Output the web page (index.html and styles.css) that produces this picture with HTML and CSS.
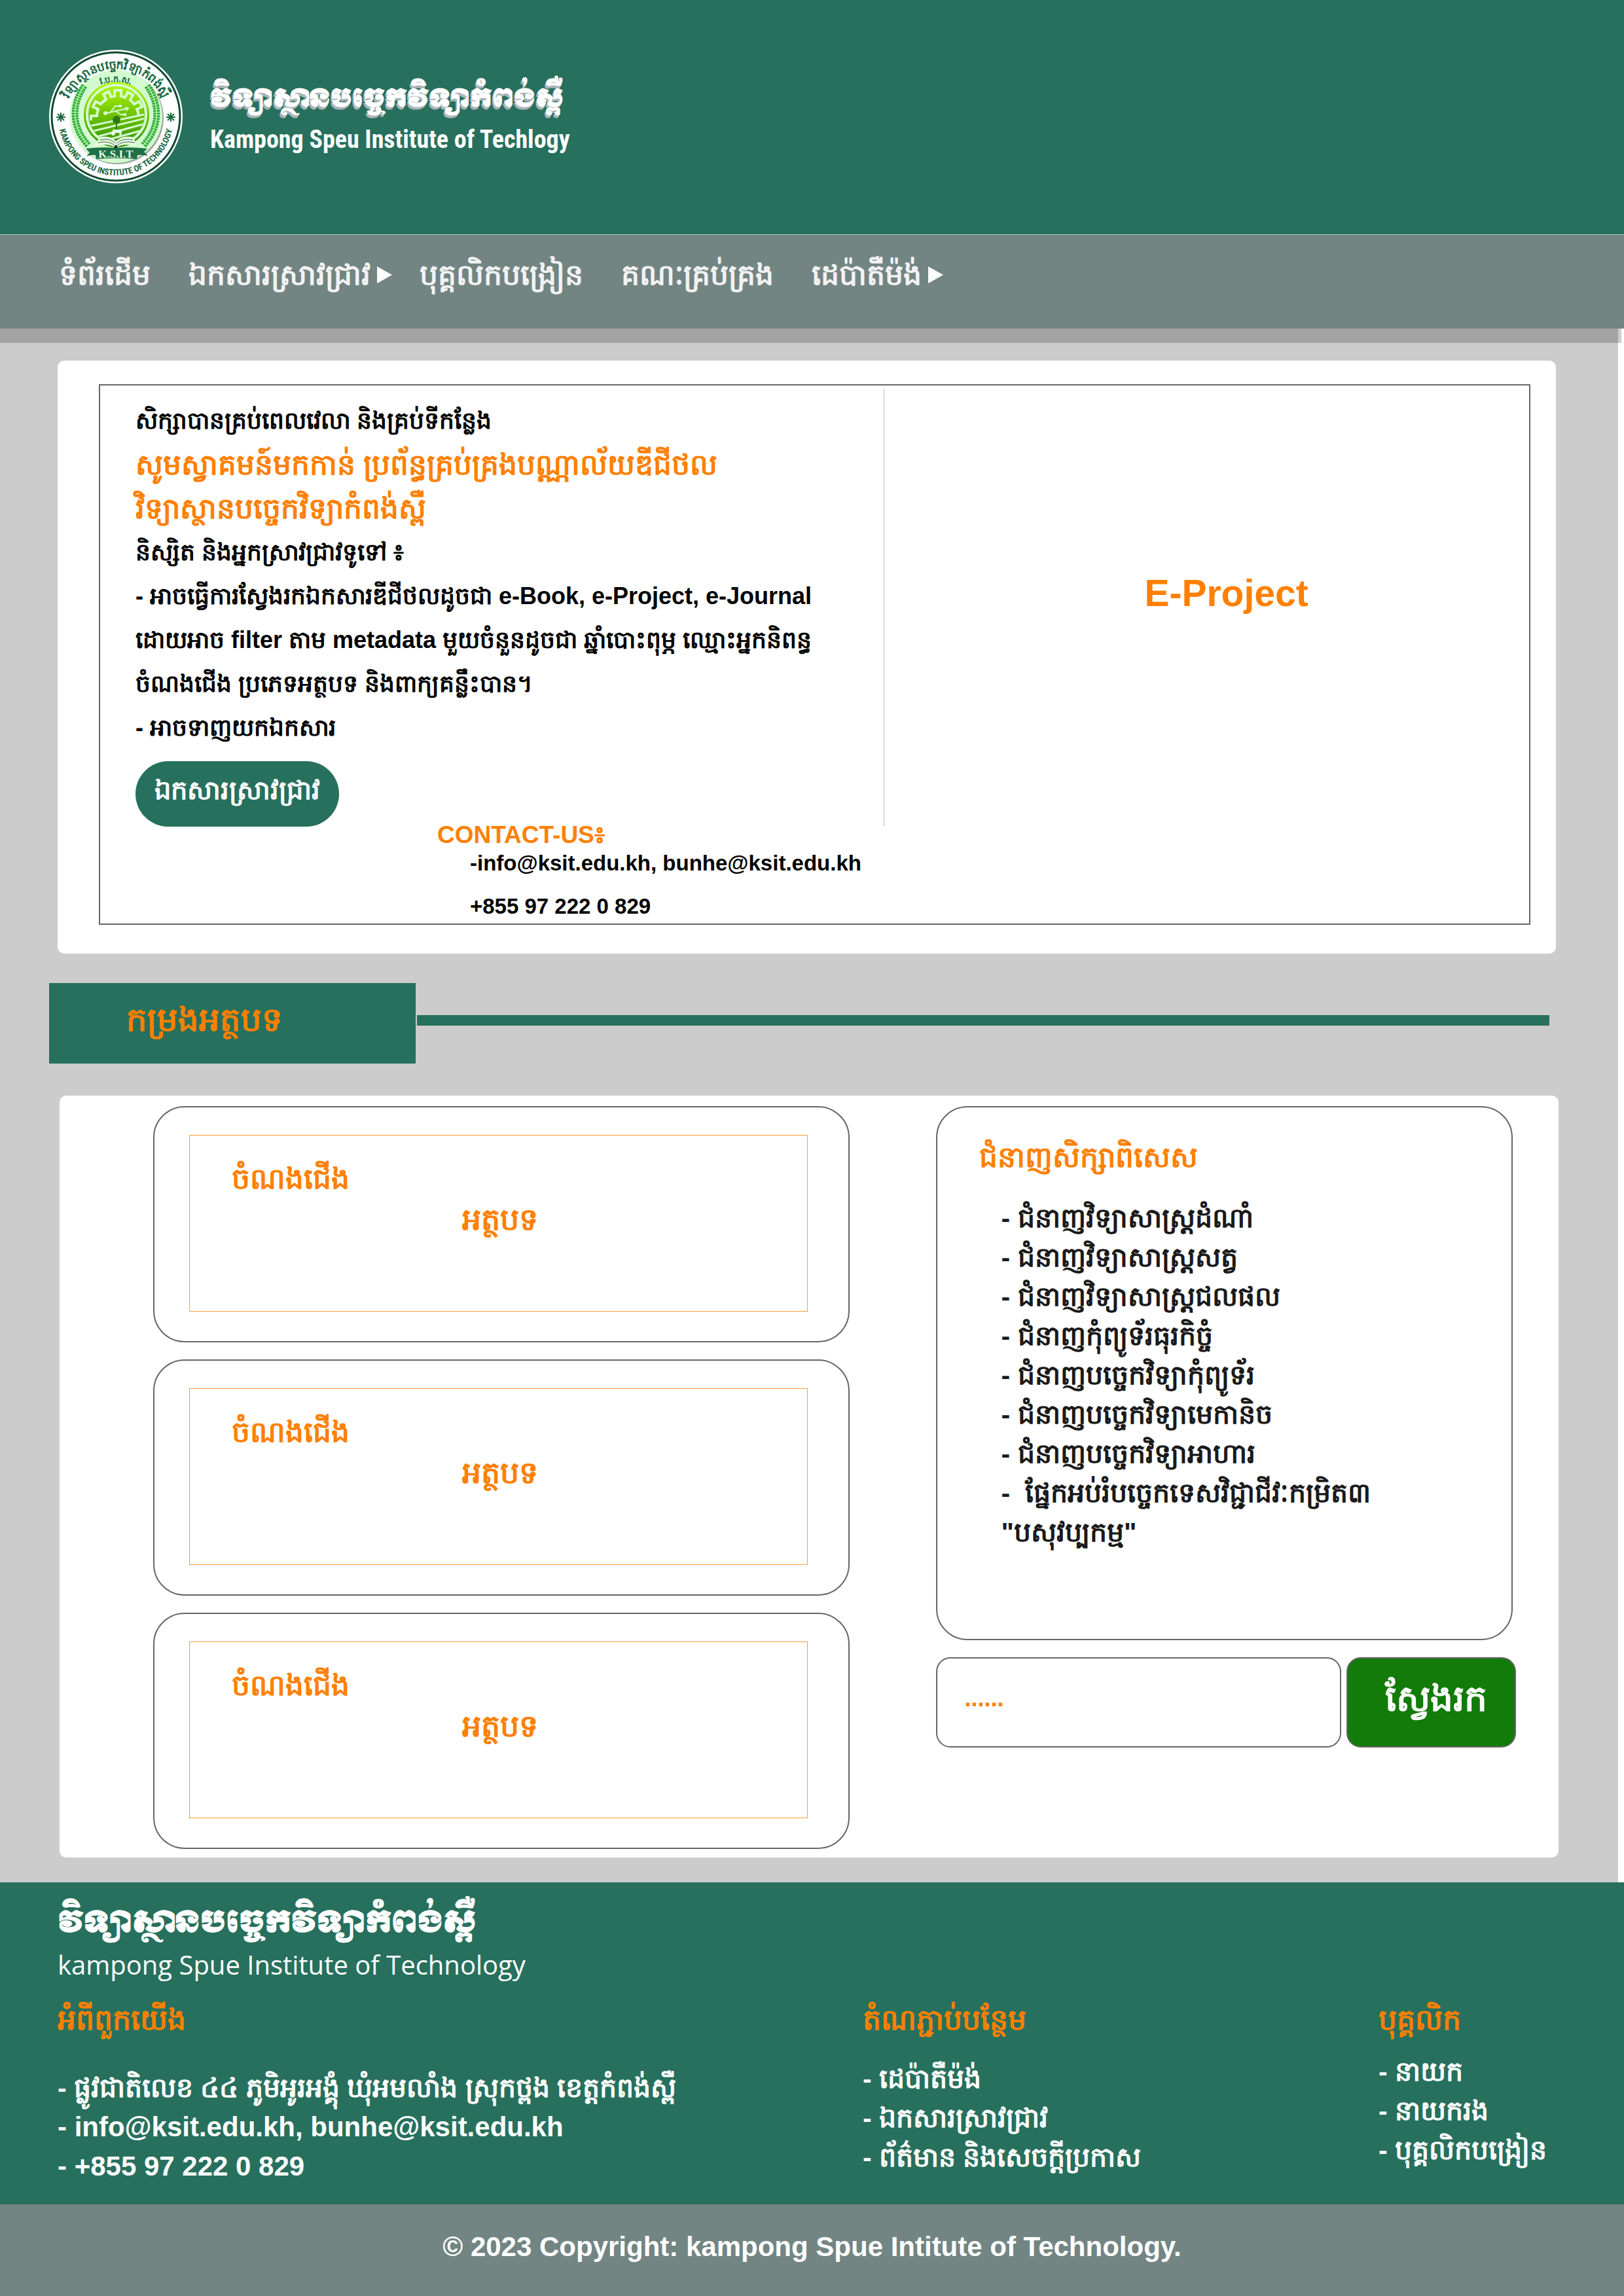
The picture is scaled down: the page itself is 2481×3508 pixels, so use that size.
FILE: index.html
```html
<!DOCTYPE html>
<html lang="km">
<head>
<meta charset="utf-8">
<meta name="viewport" content="width=device-width, initial-scale=1">
<title>Kampong Speu Institute of Techlogy</title>
<link rel="stylesheet" href="styles.css">
</head>
<body>
<header class="site-header">
  <svg class="logo" viewBox="0 0 204 204" role="img" aria-label="KSIT">
    <defs>
      <linearGradient id="lime" x1="0" y1="0" x2="0" y2="1">
        <stop offset="0" stop-color="#b9f90c"/>
        <stop offset="0.5" stop-color="#6fc400"/>
        <stop offset="1" stop-color="#2f8f06"/>
      </linearGradient>
      <path id="arc-top" d="M23 108 A79 79 0 1 1 181 108"/>
      <path id="arc-bottom" d="M14 104 A88 88 0 0 0 190 104"/>
      <path id="arc-abbr" d="M58 69 A58 58 0 0 1 146 69"/>
      <clipPath id="disc"><circle cx="103" cy="101" r="42"/></clipPath>
    </defs>
    <circle cx="102" cy="102" r="102" fill="#fff"/>
    <circle cx="102" cy="102" r="98" fill="none" stroke="#0f4a30" stroke-width="3"/>
    <circle cx="104" cy="104" r="71" fill="#9aa8a0"/>
    <circle cx="102" cy="102" r="71" fill="#d3fbcf"/>
    <g fill="none" stroke="#2aa637" stroke-width="10" stroke-dasharray="3 1">
      <path d="M54 55 C34 84 34 118 60 146"/>
      <path d="M150 55 C170 84 170 118 144 146"/>
    </g>
    <g fill="none" stroke="#a4ee8d" stroke-width="2">
      <path d="M54 55 C34 84 34 118 60 146"/>
      <path d="M150 55 C170 84 170 118 144 146"/>
    </g>
    <circle cx="103" cy="99" r="50" fill="url(#lime)"/>
    <circle cx="103" cy="99" r="45" fill="none" stroke="#d3fbcf" stroke-width="4"/>
    <path d="M64 108 V101 H73 A31 31 0 0 1 75 91 L67 87 L71 79 L79 83 A31 31 0 0 1 87 76 L83 68 L91 64 L95 72 A31 31 0 0 1 100 71 V62 H110 V71 A31 31 0 0 1 116 73 L120 65 L128 69 L124 77 A31 31 0 0 1 130 83 L138 79 L142 87 L134 91 Q137 96 136 100" fill="none" stroke="#d3fbcf" stroke-width="4"/>
    <g stroke="#d3fbcf" stroke-width="2" fill="none">
      <path d="M87 97 L118 90 M94 95 L101 86 H108 M101 93 L109 99 H116"/>
    </g>
    <g fill="#d3fbcf">
      <circle cx="86" cy="97" r="3"/>
      <path d="M116 87 L123 89 L118 94 Z"/>
      <rect x="107" y="84" width="4" height="4"/>
      <rect x="114" y="97" width="4" height="4"/>
    </g>
    <g clip-path="url(#disc)" stroke="#d3fbcf" stroke-width="3" fill="none">
      <path d="M60 117 L150 98 M60 126 L150 104 M62 136 L150 112 M70 143 L150 121 M90 144 L150 130"/>
    </g>
    <g fill="#2c7a14">
      <circle cx="103" cy="107" r="6"/>
      <rect x="102" y="112" width="2" height="12"/>
    </g>
    <g fill="#e9fbe3">
      <rect x="97" y="122" width="14" height="5"/>
      <circle cx="98" cy="128" r="3"/>
      <circle cx="109" cy="129" r="2"/>
      <path d="M77 134 Q93 130 102 140 Q112 130 129 134 L134 147 Q112 142 102 150 Q91 142 70 147 Z"/>
    </g>
    <g fill="none" stroke="#38684a" stroke-width="1">
      <path d="M78 138 Q93 134 101 143 M75 142 Q92 138 101 147 M128 138 Q113 134 103 143 M131 142 Q112 138 103 147"/>
    </g>
    <path d="M56 151 Q80 148 102 150 Q126 148 150 151 L145 156 L151 162 Q141 160 135 161 L134 167 Q102 164 72 167 L71 161 Q63 160 57 163 L62 157 Z" fill="#1f7048"/>
    <path d="M99 150 L102 145 L105 150 Z" fill="#111"/>
    <text class="logo-ribbon" x="102" y="165">K.S.I.T</text>
    <text class="logo-khmer"><textPath href="#arc-top" startOffset="50%">វិទ្យាស្ថានបច្ចេកវិទ្យាកំពង់ស្ពឺ</textPath></text>
    <text class="logo-abbr"><textPath href="#arc-abbr" startOffset="50%">វ.ប.ក.ស.</textPath></text>
    <text class="logo-latin"><textPath href="#arc-bottom" startOffset="50%">KAMPONG SPEU INSTITUTE OF TECHNOLOGY</textPath></text>
    <g stroke="#17683f" stroke-width="2">
      <path d="M18 96 V110 M11 103 H25 M13 98 L23 108 M23 98 L13 108"/>
      <path d="M186 96 V110 M179 103 H193 M181 98 L191 108 M191 98 L181 108"/>
    </g>
  </svg>
  <div class="brand">
    <p class="brand-khmer">វិទ្យាស្ថានបច្ចេកវិទ្យាកំពង់ស្ពឺ</p>
    <p class="brand-latin">Kampong Speu Institute of Techlogy</p>
  </div>
</header>

<nav class="site-nav">
  <a href="#">ទំព័រដើម</a>
  <a href="#" class="has-menu">ឯកសារស្រាវជ្រាវ</a>
  <a href="#">បុគ្គលិកបង្រៀន</a>
  <a href="#">គណៈគ្រប់គ្រង</a>
  <a href="#" class="has-menu">ដេប៉ាតឺម៉ង់</a>
</nav>

<main class="page">
  <section class="panel hero">
    <div class="hero-frame">
      <div class="intro">
        <p>សិក្សាបានគ្រប់ពេលវេលា និងគ្រប់ទីកន្លែង</p>
        <h1>សូមស្វាគមន៍មកកាន់ ប្រព័ន្ធគ្រប់គ្រងបណ្ណាល័យឌីជីថល<br>វិទ្យាស្ថានបច្ចេកវិទ្យាកំពង់ស្ពឺ</h1>
        <p>និស្សិត និងអ្នកស្រាវជ្រាវទូទៅ ៖</p>
        <p>- អាចធ្វើការស្វែងរកឯកសារឌីជីថលដូចជា e-Book, e-Project, e-Journal<br>ដោយអាច filter តាម metadata មួយចំនួនដូចជា ឆ្នាំបោះពុម្ភ ឈ្មោះអ្នកនិពន្ធ<br>ចំណងជើង ប្រភេទអត្ថបទ និងពាក្យគន្លឹះបាន។</p>
        <p>- អាចទាញយកឯកសារ</p>
        <div class="intro-actions">
          <button type="button" class="pill">ឯកសារស្រាវជ្រាវ</button>
          <div class="contact">
            <h2>CONTACT-US៖</h2>
            <p>-info@ksit.edu.kh, bunhe@ksit.edu.kh</p>
            <p>+855 97 222 0 829</p>
          </div>
        </div>
      </div>
      <div class="feature">E-Project</div>
    </div>
  </section>

  <div class="section-head">
    <h2>កម្រងអត្ថបទ</h2>
    <span class="rule"></span>
  </div>

  <section class="panel library">
    <div class="articles">
      <article class="card"><div class="card-body"><h3>ចំណងជើង</h3><p>អត្ថបទ</p></div></article>
      <article class="card"><div class="card-body"><h3>ចំណងជើង</h3><p>អត្ថបទ</p></div></article>
      <article class="card"><div class="card-body"><h3>ចំណងជើង</h3><p>អត្ថបទ</p></div></article>
    </div>
    <aside class="side">
      <section class="majors">
        <h3>ជំនាញសិក្សាពិសេស</h3>
        <ul>
          <li>- ជំនាញវិទ្យាសាស្ត្រដំណាំ</li>
          <li>- ជំនាញវិទ្យាសាស្ត្រសត្វ</li>
          <li>- ជំនាញវិទ្យាសាស្ត្រជលផល</li>
          <li>- ជំនាញកុំព្យូទ័រធុរកិច្ចំ</li>
          <li>- ជំនាញបច្ចេកវិទ្យាកុំព្យូទ័រ</li>
          <li>- ជំនាញបច្ចេកវិទ្យាមេកានិច</li>
          <li>- ជំនាញបច្ចេកវិទ្យាអាហារ</li>
          <li>-&nbsp; ផ្នែកអប់រំបច្ចេកទេសវិជ្ជាជីវៈកម្រិត៣<br>"បសុវប្បកម្ម"</li>
        </ul>
      </section>
      <form class="search">
        <input type="text" placeholder="......" aria-label="ស្វែងរក">
        <button type="submit">ស្វែងរក</button>
      </form>
    </aside>
  </section>
</main>

<footer class="site-footer">
  <p class="footer-khmer">វិទ្យាស្ថានបច្ចេកវិទ្យាកំពង់ស្ពឺ</p>
  <p class="footer-latin">kampong Spue Institute of Technology</p>
  <div class="footer-columns">
    <section class="about">
      <h3>អំពីពួកយើង</h3>
      <ul>
        <li>- ផ្លូវជាតិលេខ ៤៤ ភូមិអូរអង្គុំ ឃុំអមលាំង ស្រុកថ្ពង ខេត្តកំពង់ស្ពឺ</li>
        <li class="latin">- info@ksit.edu.kh, bunhe@ksit.edu.kh</li>
        <li class="latin">- +855 97 222 0 829</li>
      </ul>
    </section>
    <section class="links">
      <h3>តំណភ្ជាប់បន្ថែម</h3>
      <ul>
        <li>- <a href="#">ដេប៉ាតឺម៉ង់</a></li>
        <li>- <a href="#">ឯកសារស្រាវជ្រាវ</a></li>
        <li>- <a href="#">ព័ត៌មាន និងសេចក្តីប្រកាស</a></li>
      </ul>
    </section>
    <section class="staff">
      <h3>បុគ្គលិក</h3>
      <ul>
        <li>- <a href="#">នាយក</a></li>
        <li>- <a href="#">នាយករង</a></li>
        <li>- <a href="#">បុគ្គលិកបង្រៀន</a></li>
      </ul>
    </section>
  </div>
</footer>
<p class="copyright">© 2023 Copyright: kampong Spue Intitute of Technology.</p>
</body>
</html>
```
FILE: styles.css
```css
* { box-sizing: border-box; margin: 0; padding: 0; }

:root {
  --green: #27705d;
  --slate: #728583;
  --orange: #ff8000;
  --line: #666;
  --body-font: "Liberation Sans", "Khmer OS Battambang", sans-serif;
  --title-font: "Khmer OS Muol Light", Moul, "Noto Serif Khmer", "Liberation Sans", sans-serif;
}

body {
  background: #fff;
  color: #000;
  font-family: var(--body-font);
  font-weight: 700;
}

ul { list-style: none; }
a { color: inherit; text-decoration: none; }
button, input { font: inherit; }
li, p, h1, h2, h3, a { white-space: nowrap; }

/* Header */
.site-header {
  display: flex;
  gap: 42px;
  min-height: 359px;
  padding: 76px 75px;
  background: var(--green);
  border-bottom: 1px solid #b9c8c4;
  color: #fff;
}
.logo { width: 204px; height: 204px; flex: none; }
.logo text { text-anchor: middle; fill: #17683f; }
.logo-khmer { font-size: 18px; }
.logo-abbr { font-size: 13px; }
.logo-latin { font-family: "Roboto Condensed", "Liberation Serif", serif; font-size: 13px; }
.logo .logo-ribbon { font: 700 17px "Liberation Serif", serif; fill: #e9fbe3; stroke: #163; stroke-width: 1px; paint-order: stroke; }
.brand { padding-top: 40px; }
.brand-khmer {
  font-family: var(--title-font);
  font-size: 38px;
  line-height: 70px;
  text-shadow: -2px 4px 0 #aab4b8;
}
.brand-latin {
  font-family: "Roboto Condensed", Roboto, sans-serif;
  font-size: 38px;
  line-height: 54px;
}

/* Navigation */
.site-nav {
  position: relative;
  display: flex;
  align-items: flex-start;
  gap: 58px;
  min-height: 143px;
  padding: 31px 90px;
  background: var(--slate);
  box-shadow: -4px 22px 0 rgba(0, 0, 0, 0.2);
  color: #f2f2f2;
  font-size: 44px;
  line-height: 60px;
}
.has-menu { display: flex; align-items: center; gap: 10px; margin-right: -16px; }
.has-menu::after {
  content: "";
  border-left: 23px solid #fff;
  border-top: 13px solid transparent;
  border-bottom: 13px solid transparent;
}

/* Page */
.page {
  margin-right: 9px;
  padding: 49px 91px 38px 88px;
  background: #ccc;
}
.panel { background: #fff; border-radius: 10px; }

.hero { padding: 36px 39px 44px 63px; margin-right: 4px; }
.hero-frame {
  display: grid;
  grid-template-columns: 1197fr 986fr;
  border: 2px solid var(--line);
}
.intro { padding: 20px 0 6px 54px; font-size: 36px; line-height: 67px; }
.intro h1 { color: var(--orange); font-size: 44px; line-height: 67px; }
.intro-actions { display: flex; align-items: flex-start; gap: 150px; padding-top: 18px; }
.pill {
  width: 311px;
  height: 100px;
  padding-bottom: 12px;
  border: 0;
  border-radius: 50px;
  background: var(--green);
  color: #fff;
  font-size: 40px;
}
.contact { padding-top: 90px; font-size: 33px; line-height: 40px; }
.contact h2 { color: var(--orange); font-size: 37px; line-height: 46px; }
.contact p { padding-left: 50px; }
.contact p + p { padding-top: 26px; }
.feature {
  display: flex;
  align-items: center;
  justify-content: center;
  align-self: start;
  min-height: 668px;
  margin-top: 5px;
  padding: 0 0 44px 60px;
  border-left: 1px solid #bbb;
  color: var(--orange);
  font-size: 57px;
}

.section-head {
  display: flex;
  align-items: center;
  gap: 2px;
  margin: 45px 14px 49px -13px;
}
.section-head h2 {
  width: 560px;
  padding: 17px 118px 27px;
  background: var(--green);
  color: var(--orange);
  font-size: 50px;
  line-height: 79px;
}
.rule { flex: 1; height: 16px; margin-bottom: 10px; background: var(--green); }

/* Library */
.library {
  display: grid;
  grid-template-columns: 1063fr 886fr;
  gap: 132px;
  margin-left: 3px;
  padding: 16px 65px 13px 143px;
}
.articles { display: grid; gap: 26px; }
.card {
  min-height: 361px;
  padding: 42px 62px 45px 53px;
  border: 2px solid var(--line);
  border-radius: 48px;
}
.card-body {
  min-height: 270px;
  padding: 35px 64px;
  border: 1px solid #ff9a33;
  color: var(--orange);
  font-size: 46px;
  line-height: 62px;
}
.card-body h3 { font-size: 44px; }
.card-body p { padding-left: 6px; text-align: center; }

.majors {
  min-height: 816px;
  margin-right: 5px;
  padding: 42px 64px;
  border: 2px solid var(--line);
  border-radius: 48px;
}
.majors h3 { color: var(--orange); font-size: 44px; line-height: 68px; }
.majors ul { padding: 29px 0 0 34px; color: #1a1a1a; font-size: 41px; line-height: 60px; }

.search { display: flex; gap: 8px; margin-top: 26px; }
.search input {
  flex: 1;
  min-width: 0;
  height: 138px;
  padding: 0 42px 12px;
  border: 2px solid var(--line);
  border-radius: 22px;
  color: var(--orange);
  font-size: 36px;
}
.search input::placeholder { color: var(--orange); opacity: 1; }
.search button {
  width: 259px;
  height: 138px;
  padding: 0 0 2px 14px;
  border: 2px solid var(--line);
  border-radius: 22px;
  background: #127b09;
  color: #fff;
  font-size: 55px;
}

/* Footer */
.site-footer {
  min-height: 492px;
  padding: 28px 88px 0;
  background: var(--green);
  color: #fff;
}
.footer-khmer { font-family: var(--title-font); font-size: 45px; line-height: 68px; }
.footer-latin { font-family: "Open Sans", "Noto Sans", sans-serif; font-size: 40px; font-weight: 400; line-height: 60px; }
.footer-columns { display: grid; grid-template-columns: 1230fr 788fr 287fr; padding-top: 20px; }
.footer-columns h3 { color: var(--orange); font-size: 44px; line-height: 68px; }
.footer-columns ul { font-size: 41px; line-height: 60px; }
.footer-columns .latin { font-size: 42px; }
.about ul { padding-top: 40px; }
.links ul { padding-top: 26px; }
.staff ul { padding-top: 15px; }
.copyright {
  min-height: 140px;
  padding-top: 35px;
  background: var(--slate);
  color: #fff;
  font-size: 42px;
  line-height: 60px;
  text-align: center;
}
```
